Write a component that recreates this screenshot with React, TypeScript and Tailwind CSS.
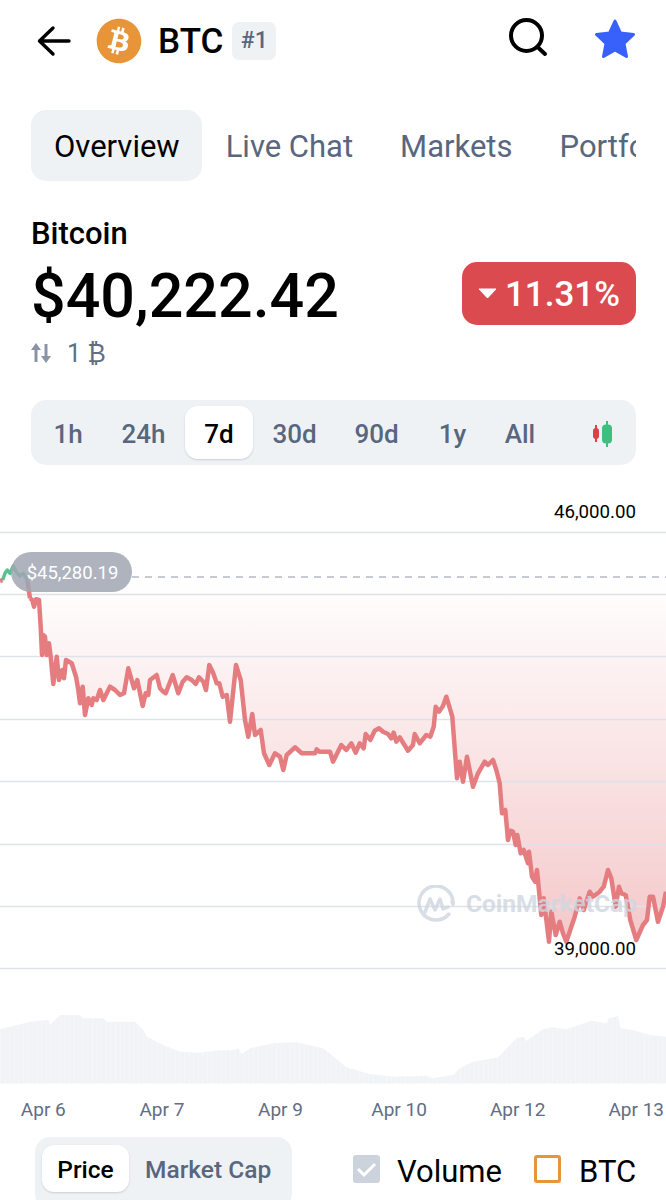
import React from "react";
import { FaBitcoin } from "react-icons/fa";

const z5 = [[90,175],[97,180],[102,200],[108,178],[117,180],[122,260],[126,345],[130,285],[135,290],[140,345],[147,310],[152,350],[160,432],[170,350],[177,420],[187,390],[192,415],[198,360],[215,370],[228,410],[235,450],[240,490],[248,440],[255,525],[265,475],[275,495],[280,475],[290,480],[300,450],[310,480],[330,440],[345,450],[360,465],[372,460],[385,385],[402,445],[412,420],[428,498],[437,460],[445,465],[450,420],[470,405],[480,445],[490,455],[497,460],[518,405],[535,460],[548,425],[560,412],[575,420],[587,432],[597,412],[610,425],[618,450],[628,375],[640,400],[650,430],[658,430],[668,470],[680,465],[690,545],[708,375],[722,420],[735,540],[745,590],[757,522],[765,585],[782,570],[792,640],[808,675],[825,640],[840,650],[850,690],[860,645],[885,622],[905,640],[945,640],[950,628],[958,635],[990,635]];
const z6 = [[0,245],[25,195],[40,210],[55,190],[68,218],[80,190],[92,205],[98,162],[112,180],[125,152],[138,145],[150,155],[165,162],[175,175],[182,158],[190,185],[200,172],[225,212],[240,195],[245,162],[260,190],[280,165],[292,170],[302,140],[308,80],[318,95],[330,78],[340,50],[358,110],[372,295],[380,245],[390,305],[402,230],[420,320],[435,280],[455,245],[465,255],[480,240],[490,270],[500,310],[507,400],[517,390],[525,480],[532,452],[540,455],[548,495],[553,465],[563,520],[572,510],[585,550],[588,515],[597,590],[606,605],[612,570],[625,705],[632,655],[648,785],[655,695],[668,765],[680,725],[690,760],[700,785],[725,710],[740,655],[752,690],[770,635],[780,650],[800,635],[812,620],[825,570],[835,595],[848,680],[858,620],[865,640],[878,645],[892,720],[910,780],[930,735],[942,720],[950,650],[960,650],[975,725],[990,680],[999,635]];
const TOP = 490;
const red = [...z5.map(([x,y]) => [x/3, 540+y/3-TOP]), ...z6.map(([x,y]) => [333+x/3, 680+y/3-TOP])];
const green = [[8,120],[15,100],[22,90],[30,100],[40,78],[50,98],[60,108],[70,100],[82,120]].map(([x,y]) => [x/3, 540+y/3-TOP]);
const redStart = [[0,122],[8,120]].map(([x,y]) => [x/3, 540+y/3-TOP]);
const redJoin = [[82,120],[90,175]].map(([x,y]) => [x/3, 540+y/3-TOP]);
const str = (a: number[][]) => a.map(p => p[0].toFixed(1)+","+p[1].toFixed(1)).join(" ");
const dashY = 577-TOP;
const area = [[28,dashY], ...red, [666,dashY]];

const v7 = [[0,148],[90,125],[145,120],[150,135],[180,105],[240,105],[250,115],[310,115],[320,125],[405,125],[430,150],[440,170],[490,195],[540,215],[600,218],[640,212],[700,210],[715,205],[725,222],[750,205],[820,190],[890,187],[970,205]];
const v8 = [[0,228],[40,262],[110,282],[180,290],[280,287],[298,295],[360,285],[380,265],[420,245],[495,232],[550,175],[572,170],[580,183],[630,148],[660,142],[700,148],[775,122],[820,130],[828,115],[855,108],[862,145],[900,150],[950,165],[999,170]];
const BASE = 1083.5-TOP;
const vol = [[0,BASE],...v7.map(([x,y]) => [x/3, 980+y/3-TOP]),...v8.map(([x,y]) => [333+x/3, 980+y/3-TOP]),[666,BASE]];
const grid = [532,594,656,719,781,844,906,968];

const tabs = ["Live Chat","Markets","Portfolio"];
const ranges: [string,string][] = [["1h","w-[74px]"],["24h","w-[77px]"],["7d","w-[68px] ml-[3px]"],["30d","w-[83px]"],["90d","w-[81px]"],["1y","w-[71px]"],["All","w-[64px]"]];
const dates = ["Apr 6","Apr 7","Apr 9","Apr 10","Apr 12","Apr 13"];

export default function App() {
  return (
    <div className="w-[666px] h-[1200px] overflow-hidden bg-white font-['Roboto',sans-serif] text-black">
      <header className="flex items-center h-[82px] pl-[36px] pr-[30px]">
        <svg width="36" height="32" viewBox="0 0 36 32" fill="none" stroke="#000" strokeWidth="3.4" strokeLinecap="round" strokeLinejoin="round" className="-mt-[1px]">
          <path d="M33 16H4M17 3 3.5 16 17 29" />
        </svg>
        <FaBitcoin className="ml-[24px] text-[#e8953a]" size={46} />
        <span className="ml-[16px] text-[35px] font-medium leading-none">BTC</span>
        <span className="ml-[9px] w-[44px] h-[38px] flex items-center justify-center rounded-[7px] bg-[#eff2f5] text-[#58667e] text-[23px] font-medium">#1</span>
        <svg width="42" height="42" viewBox="0 0 42 42" fill="none" stroke="#000" strokeWidth="4" strokeLinecap="round" className="ml-auto -mt-[5px]">
          <circle cx="18.500" cy="17.500" r="15.500" />
          <path d="M29.500 29 37 36" />
        </svg>
        <svg width="42" height="42" viewBox="0 0 42 42" className="ml-[44px] -mt-[5px]">
          <path d="M21 3 26.500 15 39.500 16.500 30 25.500 32.500 38.500 21 32 9.500 38.500 12 25.500 2.500 16.500 15.500 15Z" fill="#3861fb" stroke="#3861fb" strokeWidth="3" strokeLinejoin="round" />
        </svg>
      </header>

      <nav className="mt-[28px] ml-[31px] w-[605px] h-[71px] flex overflow-hidden">
        <span className="shrink-0 h-full pt-[3px] pl-[23px] pr-[22px] flex items-center rounded-[15px] bg-[#eff2f5] text-[31px]">Overview</span>
        {tabs.map(t => (
          <span key={t} className="shrink-0 h-full pt-[3px] pl-[24px] pr-[23px] flex items-center text-[#58667e] text-[31px]">{t}</span>
        ))}
      </nav>

      <section className="mt-[36px] pl-[31px] pr-[30px]">
        <div className="text-[31px] font-medium leading-[34px]">Bitcoin</div>
        <div className="flex items-start justify-between">
          <span className="mt-[13px] text-[61px] font-medium leading-[64px]">$40,222.42</span>
          <span className="mt-[11px] w-[174px] h-[63px] pt-[3px] flex items-center justify-center gap-[8px] rounded-[15px] bg-[#db4a4f] text-white text-[35px] font-medium">
            <svg width="19" height="11" viewBox="0 0 19 11" className="-mt-[3px]"><path d="M1 1H18L9.500 10Z" fill="#fff" stroke="#fff" strokeLinejoin="round" /></svg>
            11.31%
          </span>
        </div>
        <div className="mt-[10px] flex items-center h-[32px] text-[#616e85] text-[25px]">
          <svg width="22" height="22" viewBox="0 0 22 22" fill="#8a94a6" className="-mt-[3px] -ml-[1px]">
            <path d="M6 1 11 8H7.500V20H4.500V8H1ZM16 21 11 14H14.500V2H17.500V14H21Z" />
          </svg>
          <span className="ml-[15px]">1 ₿</span>
        </div>
      </section>

      <section className="mt-[30px] mx-[31px] w-[605px] h-[65px] flex items-center rounded-[15px] bg-[#eff2f5] text-[26px] font-medium text-[#58667e]">
        {ranges.map(([r,w]) => r === "7d"
          ? <span key={r} className={"h-[53px] pt-[3px] flex items-center justify-center rounded-[13px] bg-white text-black shadow-[0_1px_2px_rgba(88,102,126,0.25)] " + w}>{r}</span>
          : <span key={r} className={"h-[53px] pt-[3px] flex items-center justify-center " + w}>{r}</span>)}
        <svg width="24" height="28" viewBox="0 0 24 28" className="ml-[39px] mt-[2px] -translate-x-[1px]">
          <path d="M6 5V22" stroke="#dc3f45" strokeWidth="2" />
          <rect x="3" y="8" width="6" height="11" rx="3" fill="#dc3f45" />
          <path d="M17 1V27" stroke="#3fbf7f" strokeWidth="2" />
          <rect x="12" y="4.500" width="10" height="19" rx="4" fill="#3fbf7f" />
        </svg>
      </section>

      <section className="relative mt-[25px] h-[609px]">
        <svg width="666" height="609" className="block">
          <defs>
            <linearGradient id="fill" gradientUnits="userSpaceOnUse" x1="0" y1={dashY} x2="0" y2={450}>
              <stop offset="0" stopColor="#db4a4f" stopOpacity="0" />
              <stop offset="1" stopColor="#db4a4f" stopOpacity="0.3" />
            </linearGradient>
            <pattern id="bars" width="4.600" height="10" patternUnits="userSpaceOnUse">
              <rect width="4.600" height="10" fill="#f1f3f6" />
              <rect width="1" height="10" fill="#f5f6f9" />
            </pattern>
          </defs>
          <polygon points={str(area)} fill="url(#fill)" />
          {grid.map(y => <line key={y} x1="0" x2="666" y1={y-TOP+0.5} y2={y-TOP+0.5} stroke="#dfe2e8" strokeWidth="1.500" />)}
          <line x1="132" x2="666" y1={dashY} y2={dashY} stroke="#b4b9c3" strokeWidth="1.500" strokeDasharray="7 6" />
          <polyline points={str(redStart)} fill="none" stroke="#e57d80" strokeWidth="4.500" />
          <polyline points={str(redJoin)} fill="none" stroke="#e57d80" strokeWidth="4.500" />
          <polyline points={str(green)} fill="none" stroke="#5fbf92" strokeWidth="3.500" strokeLinejoin="round" />
          <polyline points={str(red)} fill="none" stroke="#e57d80" strokeWidth="4.500" strokeLinejoin="round" />
          <polygon points={str(vol)} fill="url(#bars)" />
        </svg>
        <span className="absolute right-[30px] top-[10px] text-[18.700px] leading-[24px]">46,000.00</span>
        <span className="absolute right-[30px] top-[447px] text-[18.700px] leading-[24px]">39,000.00</span>
        <span className="absolute left-[11px] top-[62px] w-[121px] h-[40px] pt-[3px] pl-[2px] rounded-full bg-[#a0a6b2]/85 flex items-center justify-center text-white text-[18.500px]">$45,280.19</span>
        <div className="absolute left-[417px] top-[395px] flex items-center opacity-80">
          <svg width="38" height="38" viewBox="0 0 38 38" fill="none" stroke="#cfd6e0" strokeWidth="3.500" strokeLinecap="round" strokeLinejoin="round">
            <path d="M32 29A17 17 0 1 1 36 19" />
            <path d="M8 27 13 14 18 25 23 14 26 24 31 22 M36 19 35 17" />
          </svg>
          <span className="ml-[11px] text-[24.500px] font-bold text-[#cfd6e0] leading-none">CoinMarketCap</span>
        </div>
      </section>

      <div className="-mt-[1px] -ml-[16px] flex text-[19px] leading-[24px] text-[#616e85]">
        {dates.map(d => <span key={d} className="w-[118.6px] shrink-0 text-center">{d}</span>)}
      </div>

      <div className="mt-[15px] flex items-start">
        <div className="ml-[35px] w-[257px] h-[72px] rounded-[15px] bg-[#eff2f5] flex items-start pt-[8px] pl-[7px] text-[24.500px] font-medium text-[#58667e]">
          <span className="w-[87px] h-[47px] pt-[4px] flex items-center justify-center rounded-[12px] bg-white text-black shadow-[0_1px_2px_rgba(88,102,126,0.25)]">Price</span>
          <span className="ml-[16px] h-[47px] pt-[4px] flex items-center">Market Cap</span>
        </div>
        <div className="ml-[61px] mt-[18px] w-[27px] h-[28px] rounded-[3px] bg-[#cdd3dc] flex items-center justify-center">
          <svg width="21" height="17" viewBox="0 0 21 17" fill="none" stroke="#fff" strokeWidth="3"><path d="M2 8 8 14 19 3" /></svg>
        </div>
        <span className="ml-[17px] mt-[17px] text-[31px] leading-[36px]">Volume</span>
        <span className="ml-[32px] mt-[18px] w-[27px] h-[28px] rounded-[3px] border-[3px] border-[#e8953a]" />
        <span className="ml-[18px] mt-[17px] text-[31px] leading-[36px]">BTC</span>
      </div>
    </div>
  );
}
